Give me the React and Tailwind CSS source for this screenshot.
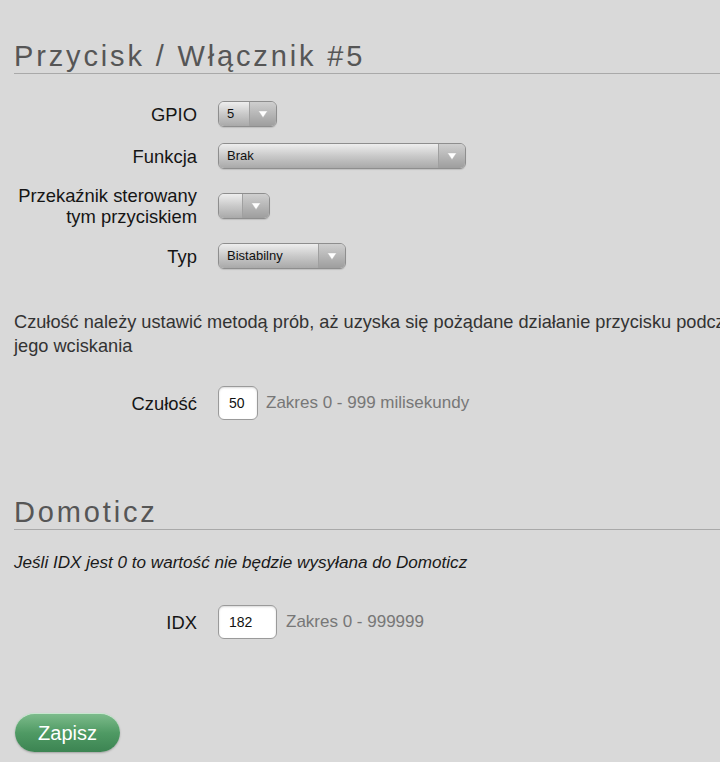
import React from 'react';

const font = { fontFamily: '"Liberation Sans", Arial, sans-serif' };

const Arrow = () => (
  <svg width="10" height="8" viewBox="0 0 10 8">
    <polygon points="0.5,1 9.5,1 5,7.5" fill="#ffffff" stroke="#b5b5b5" strokeWidth="0.4" />
  </svg>
);

const Select = ({ value, className }) => (
  <div
    className={`flex h-[26px] overflow-hidden rounded-[6px] border border-[#8e8e8e] shadow-[0_1px_1px_rgba(0,0,0,0.12)] ${className}`}
  >
    <div className="flex flex-1 items-center bg-linear-to-b from-[#eeeeee] via-[#c9c9c9] to-[#a9a9a9] pl-[8px] text-[13px] text-[#111]">
      {value}
    </div>
    <div className="flex w-[27px] items-center justify-center border-l border-[#a0a0a0] bg-linear-to-b from-[#cfcfcf] to-[#9e9e9e]">
      <Arrow />
    </div>
  </div>
);

const Row = ({ label, children }) => (
  <div className="flex items-center">
    <div className="w-[183px] text-right text-[18.4px] leading-[21px] text-[#151515]">{label}</div>
    <div className="ml-[21px] flex items-center">{children}</div>
  </div>
);

const NumberInput = ({ value, className }) => (
  <div
    className={`flex h-[34px] items-center rounded-[6px] border border-[#9a9a9a] bg-white pl-[10px] text-[14px] text-[#111] shadow-[inset_0_1px_2px_rgba(0,0,0,0.15)] ${className}`}
  >
    {value}
  </div>
);

export default function App() {
  return (
    <div className="min-h-screen w-full overflow-hidden bg-[#d9d9d9]" style={font}>
      <div className="w-[790px] pb-[10px] pl-[14px]">
        {/* Przycisk */}
        <h1 className="mt-[39px] border-b border-[#a9a9a9] text-[29px] leading-[34px] tracking-[2.85px] text-[#565656]">
          Przycisk / Włącznik #5
        </h1>

        <div className="mt-[27px] flex flex-col gap-[16px]">
          <Row label="GPIO">
            <Select value="5" className="w-[59px]" />
          </Row>
          <Row label="Funkcja">
            <Select value="Brak" className="w-[248px]" />
          </Row>
          <Row
            label={
              <>
                Przekaźnik sterowany
                <br />
                tym przyciskiem
              </>
            }
          >
            <Select value="" className="w-[52px]" />
          </Row>
          <Row label="Typ">
            <Select value="Bistabilny" className="w-[128px]" />
          </Row>
        </div>

        <p className="mt-[41px] w-[745px] text-[18.2px] leading-[24px] text-[#333]">
          Czułość należy ustawić metodą prób, aż uzyska się pożądane działanie przycisku podczas jego wciskania
        </p>

        <div className="mt-[28px]">
          <Row label="Czułość">
            <NumberInput value="50" className="w-[40px]" />
            <span className="ml-[8px] text-[17px] text-[#777]">Zakres 0 - 999 milisekundy</span>
          </Row>
        </div>

        {/* Domoticz */}
        <h2 className="mt-[75px] border-b border-[#a9a9a9] text-[29px] leading-[34px] tracking-[2.85px] text-[#565656]">
          Domoticz
        </h2>

        <p className="mt-[21px] text-[17.1px] leading-[24px] italic text-[#1a1a1a]">
          Jeśli IDX jest 0 to wartość nie będzie wysyłana do Domoticz
        </p>

        <div className="mt-[30px]">
          <Row label="IDX">
            <NumberInput value="182" className="w-[59px]" />
            <span className="ml-[9px] text-[17px] text-[#777]">Zakres 0 - 999999</span>
          </Row>
        </div>

        <button className="ml-[1px] mt-[74px] flex h-[39px] w-[105px] items-center justify-center rounded-full border-t border-[#c8e6cf] bg-linear-to-b from-[#7cbb8b] via-[#4f9a64] to-[#3c8452] text-[20px] text-white shadow-[0_1px_2px_rgba(0,0,0,0.25)]">
          Zapisz
        </button>
      </div>
    </div>
  );
}
